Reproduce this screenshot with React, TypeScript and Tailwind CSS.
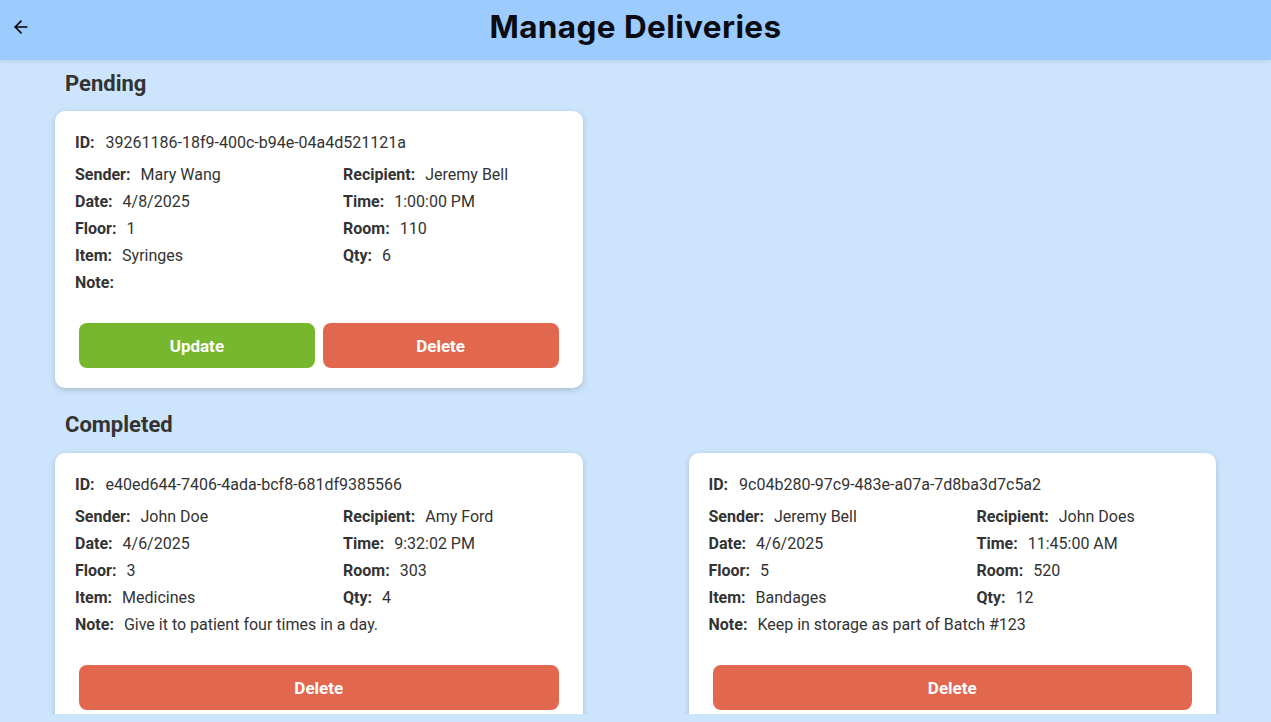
import { ArrowLeft } from 'lucide-react';

type Delivery = {
  id: string;
  sender: string;
  recipient: string;
  date: string;
  time: string;
  floor: string;
  room: string;
  item: string;
  qty: string;
  note: string;
};

const PENDING: Delivery[] = [
  {
    id: '39261186-18f9-400c-b94e-04a4d521121a',
    sender: 'Mary Wang',
    recipient: 'Jeremy Bell',
    date: '4/8/2025',
    time: '1:00:00 PM',
    floor: '1',
    room: '110',
    item: 'Syringes',
    qty: '6',
    note: '',
  },
];

const COMPLETED: Delivery[] = [
  {
    id: 'e40ed644-7406-4ada-bcf8-681df9385566',
    sender: 'John Doe',
    recipient: 'Amy Ford',
    date: '4/6/2025',
    time: '9:32:02 PM',
    floor: '3',
    room: '303',
    item: 'Medicines',
    qty: '4',
    note: 'Give it to patient four times in a day.',
  },
  {
    id: '9c04b280-97c9-483e-a07a-7d8ba3d7c5a2',
    sender: 'Jeremy Bell',
    recipient: 'John Does',
    date: '4/6/2025',
    time: '11:45:00 AM',
    floor: '5',
    room: '520',
    item: 'Bandages',
    qty: '12',
    note: 'Keep in storage as part of Batch #123',
  },
];

function Field({ label, value }: { label: string; value: string }) {
  return (
    <div className="flex items-center h-[27px] whitespace-nowrap">
      <span className="font-bold mr-[10px]">{label}:</span>
      <span>{value}</span>
    </div>
  );
}

function DeliveryCard({ d, pending }: { d: Delivery; pending?: boolean }) {
  return (
    <div className="bg-white rounded-[10px] shadow-[0_2px_6px_rgba(0,0,0,0.18)] pt-[18px] pb-[20px] text-[16px] text-[#333]">
      <div className="px-[20px]">
        <div className="flex items-center h-[27px] mb-[5px]">
          <span className="font-bold mr-[11px]">ID:</span>
          <span>{d.id}</span>
        </div>
        <div className="grid grid-cols-[268px_1fr]">
          <Field label="Sender" value={d.sender} />
          <Field label="Recipient" value={d.recipient} />
          <Field label="Date" value={d.date} />
          <Field label="Time" value={d.time} />
          <Field label="Floor" value={d.floor} />
          <Field label="Room" value={d.room} />
          <Field label="Item" value={d.item} />
          <Field label="Qty" value={d.qty} />
          <div className="col-span-2">
            <Field label="Note" value={d.note} />
          </div>
        </div>
      </div>
      <div className="flex gap-[8px] px-[24px] mt-[27px]">
        {pending && (
          <button className="flex-1 h-[45px] rounded-[8px] bg-[#77b72d] text-white font-bold text-[17px] pt-[2px]">
            Update
          </button>
        )}
        <button className="flex-1 h-[45px] rounded-[8px] bg-[#e2674f] text-white font-bold text-[17px] pt-[2px]">
          Delete
        </button>
      </div>
    </div>
  );
}

export default function App() {
  return (
    <div className="h-[722px] bg-[#cce5fd] flex flex-col overflow-hidden" style={{ fontFamily: 'Roboto, "Liberation Sans", sans-serif' }}>
      <header className="relative h-[60px] shrink-0 bg-[#9ccbfd] flex items-center justify-center shadow-[0_2px_4px_rgba(0,0,0,0.08)] z-10">
        <button className="absolute left-[11px] top-[17px] text-black">
          <ArrowLeft size={20} strokeWidth={2} />
        </button>
        <h1 className="text-[31.5px] font-bold text-[#0b0b14] tracking-[0.4px] -mt-[6px]" style={{ fontFamily: 'Inter, "Open Sans", sans-serif' }}>
          Manage Deliveries
        </h1>
      </header>
      <main className="h-[654px] overflow-hidden px-[55px]">
        <h2 className="text-[22px] font-bold text-[#333] pl-[10px] h-[51px] flex items-center pb-[4px]">Pending</h2>
        <div className="grid grid-cols-2 gap-x-[106px]">
          {PENDING.map((d) => (
            <DeliveryCard key={d.id} d={d} pending />
          ))}
        </div>
        <h2 className="text-[22px] font-bold text-[#333] pl-[10px] h-[65px] flex items-center pt-[8px]">Completed</h2>
        <div className="grid grid-cols-2 gap-x-[106px]">
          {COMPLETED.map((d) => (
            <DeliveryCard key={d.id} d={d} />
          ))}
        </div>
      </main>
    </div>
  );
}
